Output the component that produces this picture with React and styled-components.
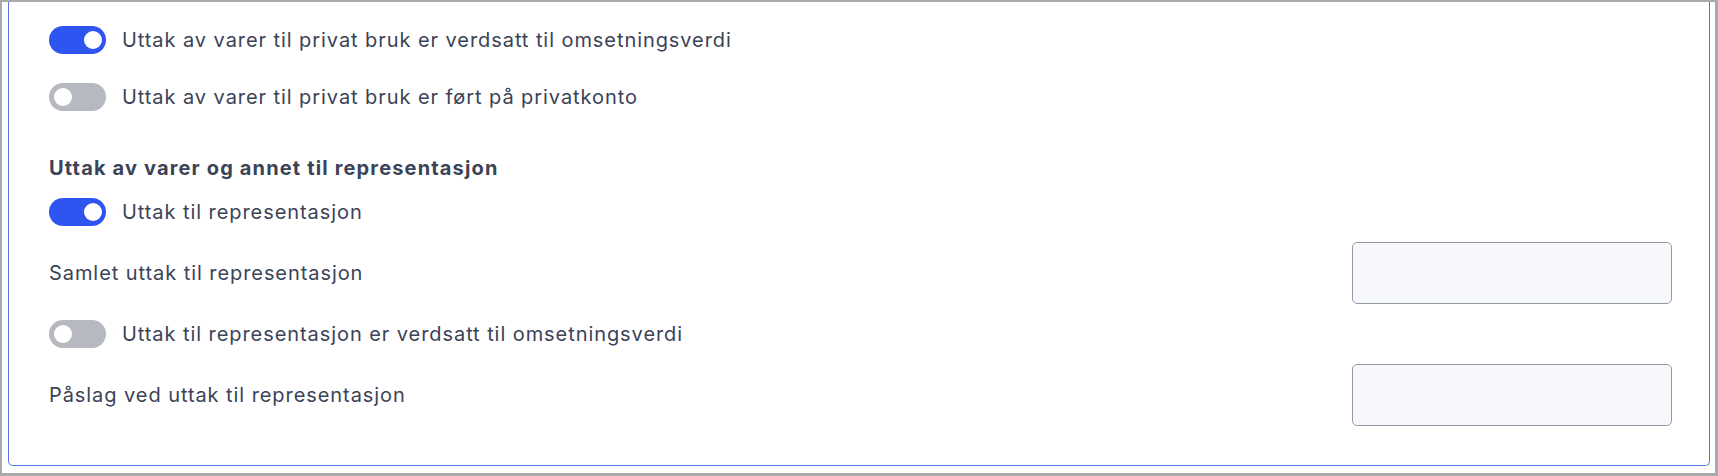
import React, {useState} from 'react';
import styled, {createGlobalStyle} from 'styled-components';

const GlobalStyle = createGlobalStyle`
  html, body {
    margin: 0;
    padding: 0;
    background: #ffffff;
  }

  body {
    font-family: Inter, "Noto Sans", "Liberation Sans", sans-serif;
    color: #3b4357;
  }
`;

const Frame = styled.div`
  box-sizing: border-box;
  height: 476px;
  border-style: solid;
  border-color: #a9a9a9;
  border-width: 2px 3px 3px 2px;
  padding: 0 5px 9px 6px;
  display: flex;
  flex-direction: column;
  overflow: hidden;
`;

const Panel = styled.section`
  flex: 1;
  border: 1px solid #5479e6;
  border-top: none;
  border-radius: 0 0 5px 5px;
  padding: 24px 37px 39px 40px;
  display: flex;
  flex-direction: column;
  justify-content: flex-end;
`;

const Group = styled.div`
  display: flex;
  flex-direction: column;
  gap: ${(props) => props.gap}px;
  margin-top: ${(props) => props.offset || 0}px;
`;

const Heading = styled.h4`
  margin: 0 0 2px;
  font-size: 20px;
  line-height: 24px;
  font-weight: 700;
  letter-spacing: 1.15px;
  color: #3b4357;
`;

const ToggleRow = styled.label`
  display: flex;
  align-items: center;
  gap: 16px;
  height: 28px;
  cursor: pointer;
`;

const Track = styled.span`
  position: relative;
  flex: none;
  width: 57px;
  height: 28px;
  border-radius: 14px;
  background: ${(props) => (props.on ? '#2f55f0' : '#b6b9bf')};
  transition: background 0.15s;
`;

const Knob = styled.span`
  position: absolute;
  top: 5px;
  left: ${(props) => (props.on ? '35px' : '5px')};
  width: 18px;
  height: 18px;
  border-radius: 50%;
  background: #ffffff;
  transition: left 0.15s;
`;

const Label = styled.span`
  font-size: 20px;
  line-height: 24px;
  letter-spacing: 0.93px;
  color: #3b4357;
`;

const FieldRow = styled.div`
  display: flex;
  align-items: center;
  justify-content: space-between;
  height: 62px;
`;

const Input = styled.input`
  box-sizing: border-box;
  width: 320px;
  height: 62px;
  border: 1px solid #989ba5;
  border-radius: 5px;
  background: #f7f8fb;
  padding: 0 14px;
  font: inherit;
  font-size: 20px;
  color: #3b4357;
  outline: none;
`;

function Toggle({label, initial}) {
  const [on, setOn] = useState(initial);

  return (
    <ToggleRow onClick={() => setOn(!on)}>
      <Track on={on ? 1 : 0}>
        <Knob on={on ? 1 : 0} />
      </Track>
      <Label>{label}</Label>
    </ToggleRow>
  );
}

export default function App() {
  return (
    <>
      <GlobalStyle />
      <Frame>
        <Panel>
          <Group gap={29}>
            <Toggle initial label="Uttak av varer til privat bruk er verdsatt til omsetningsverdi" />
            <Toggle initial={false} label="Uttak av varer til privat bruk er ført på privatkonto" />
          </Group>
          <Group gap={16} offset={45}>
            <Heading>Uttak av varer og annet til representasjon</Heading>
            <Toggle initial label="Uttak til representasjon" />
            <FieldRow>
              <Label>Samlet uttak til representasjon</Label>
              <Input type="text" />
            </FieldRow>
            <Toggle initial={false} label="Uttak til representasjon er verdsatt til omsetningsverdi" />
            <FieldRow>
              <Label>Påslag ved uttak til representasjon</Label>
              <Input type="text" />
            </FieldRow>
          </Group>
        </Panel>
      </Frame>
    </>
  );
}
